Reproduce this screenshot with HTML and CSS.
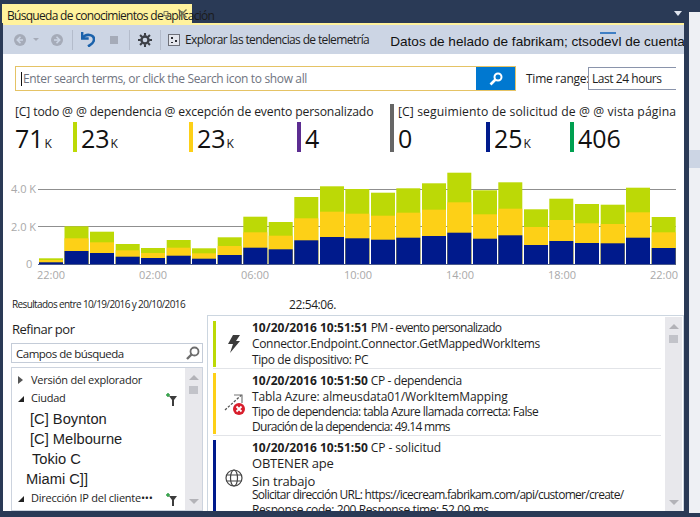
FILE: index.html
```html
<!DOCTYPE html>
<html lang="es">
<head>
    <meta charset="UTF-8">
    <title>Búsqueda de conocimientos de aplicación</title>
    <link rel="stylesheet" href="styles.css">
</head>
<body>
    <div class="titlebar">
        <div class="tab">
            <span class="tab-title">Búsqueda de conocimientos de aplicación</span>
            <svg class="tab-pin" width="8" height="8" viewBox="0 0 8 8"><path d="M2 .5h4v4H2zM.5 4.500h7M4 4.500V8" fill="none" stroke="#7d7a5c"/></svg>
            <svg class="tab-close" width="9" height="9" viewBox="0 0 9 9"><path d="M.5.5l8 8M8.500.5l-8 8" stroke="#6f6d55" stroke-width="1.400"/></svg>
        </div>
        <span class="tab-menu"></span>
    </div>

    <div class="main">
        <div class="window">
            <div class="toolbar">
                <svg class="tool tool-back" width="12" height="12" viewBox="0 0 12 12"><circle cx="6" cy="6" r="6" fill="#a5abb8"/><path d="M6.500 2.800L3.300 6l3.200 3.200M3.300 6h5.700" fill="none" stroke="#ccd5e4" stroke-width="1.600"/></svg>
                <span class="tool-caret"></span>
                <svg class="tool tool-forward" width="12" height="12" viewBox="0 0 12 12"><circle cx="6" cy="6" r="6" fill="#a5abb8"/><path d="M5.500 2.800L8.700 6 5.500 9.200M8.700 6H3" fill="none" stroke="#ccd5e4" stroke-width="1.600"/></svg>
                <span class="tool-sep sep-one"></span>
                <svg class="tool tool-undo" width="14" height="15" viewBox="0 0 14 15"><path d="M1.200 0v6.500h6.500" fill="none" stroke="#1b62ab" stroke-width="2.400"/><path d="M1.800 5.800C4.500 1.500 13 2 13 7.500c0 3-2.500 5-6 7" fill="none" stroke="#1b62ab" stroke-width="2.600"/></svg>
                <span class="tool-stop"></span>
                <span class="tool-sep sep-two"></span>
                <svg class="tool tool-gear" width="14" height="14" viewBox="0 0 15 15"><circle cx="7.500" cy="7.500" r="3.800" fill="none" stroke="#3c3f46" stroke-width="2.600"/><path d="M7.500 0v3M7.500 12v3M0 7.500h3M12 7.500h3M2.200 2.200l2.100 2.100M10.700 10.700l2.100 2.100M12.800 2.200l-2.100 2.100M4.300 10.700l-2.100 2.100" stroke="#3c3f46" stroke-width="2.200"/></svg>
                <span class="tool-sep sep-three"></span>
                <svg class="tool tool-trend" width="12" height="12" viewBox="0 0 12 12"><rect x=".5" y=".5" width="11" height="11" fill="#e4e6ec" stroke="#6e7078"/><path d="M3 3h2v2H3zM7 6h2v2H7zM3 8h2v1H3z" fill="#2b2d33"/></svg>
                <span class="tool-label">Explorar las tendencias de telemetría</span>
                <span class="account">Datos de helado de fabrikam; ctsodevl de cuenta</span>
                <span class="account-mark"></span>
            </div>

            <div class="search-row">
                <div class="search-box">
                    <span class="search-input"><i class="caret"></i>Enter search terms, or click the Search icon to show all</span>
                    <span class="search-btn">
                        <svg width="14" height="14" viewBox="0 0 14 14"><circle cx="9" cy="5" r="3.500" fill="none" stroke="#fff" stroke-width="2"/><path d="M6.500 7.500L1.500 12.500" stroke="#fff" stroke-width="2.600"/></svg>
                    </span>
                </div>
                <span class="range-label">Time range:</span>
                <span class="range-select">Last 24 hours</span>
            </div>

            <div class="metrics">
                <div class="metric-group group-left">
                    <div class="metric-title">[C] todo @ @ dependencia @ excepción de evento personalizado</div>
                    <div class="stats">
                        <div class="stat stat-all">71<small>K</small></div>
                        <div class="stat stat-dep">23<small>K</small></div>
                        <div class="stat stat-exc">23<small>K</small></div>
                        <div class="stat stat-evt">4</div>
                    </div>
                </div>
                <div class="metric-group group-right">
                    <div class="metric-title">[C] seguimiento de solicitud de @ @ vista página</div>
                    <div class="stats">
                        <div class="stat stat-trace">0</div>
                        <div class="stat stat-req">25<small>K</small></div>
                        <div class="stat stat-page">406</div>
                    </div>
                </div>
            </div>

            <svg class="chart" width="681" height="115" viewBox="3 170 681 115">
                <path d="M38 189.500H676M38 226.500H676" stroke="#8f8f8f" stroke-width="1.200"/>
                <g class="axis">
                    <text x="11" y="193">4.0 K</text>
                    <text x="11" y="231">2.0 K</text>
                    <text x="26" y="268">0</text>
                    <text x="37" y="279">22:00</text>
                    <text x="139" y="279">02:00</text>
                    <text x="241" y="279">06:00</text>
                    <text x="344" y="279">10:00</text>
                    <text x="446" y="279">14:00</text>
                    <text x="548" y="279">18:00</text>
                    <text x="650" y="279">22:00</text>
                </g>
                <g fill="#bcd906">
                    <rect x="39" y="258.300" width="24" height="6"/><rect x="64.500" y="226.300" width="24" height="38"/><rect x="90" y="231.700" width="24" height="33"/><rect x="115.700" y="244" width="24" height="20"/><rect x="141" y="248" width="24" height="16"/><rect x="166.700" y="240" width="24" height="24"/><rect x="192" y="248.300" width="24" height="16"/><rect x="217.700" y="237.300" width="24" height="27"/><rect x="243.300" y="216.700" width="24" height="47"/><rect x="268.700" y="222" width="24" height="42"/><rect x="294.300" y="197" width="24" height="67"/><rect x="320" y="186.300" width="24" height="78"/><rect x="345.300" y="189" width="24" height="75"/><rect x="371" y="192.700" width="24" height="71"/><rect x="396.300" y="188.300" width="24" height="76"/><rect x="422" y="183.300" width="24" height="81"/><rect x="447.300" y="172.700" width="24" height="91"/><rect x="473" y="190.300" width="24" height="74"/><rect x="498.300" y="182.300" width="24" height="82"/><rect x="524" y="209.300" width="24" height="55"/><rect x="549.300" y="198.700" width="24" height="65"/><rect x="575" y="204" width="24" height="60"/><rect x="600.700" y="204.700" width="24" height="59"/><rect x="626" y="187.700" width="24" height="76"/><rect x="651.700" y="217" width="24" height="47"/>
                </g>
                <g fill="#fdd017">
                    <rect x="39" y="260" width="24" height="4"/><rect x="64.500" y="238.300" width="24" height="26"/><rect x="90" y="242.300" width="24" height="22"/><rect x="115.700" y="250.300" width="24" height="14"/><rect x="141" y="253" width="24" height="11"/><rect x="166.700" y="247.700" width="24" height="16"/><rect x="192" y="253.300" width="24" height="11"/><rect x="217.700" y="246" width="24" height="18"/><rect x="243.300" y="232.300" width="24" height="32"/><rect x="268.700" y="235.700" width="24" height="28"/><rect x="294.300" y="218.300" width="24" height="46"/><rect x="320" y="211.700" width="24" height="52"/><rect x="345.300" y="213.700" width="24" height="50"/><rect x="371" y="215.700" width="24" height="48"/><rect x="396.300" y="212.700" width="24" height="51"/><rect x="422" y="209.700" width="24" height="54"/><rect x="447.300" y="202.300" width="24" height="62"/><rect x="473" y="214.300" width="24" height="50"/><rect x="498.300" y="208.700" width="24" height="55"/><rect x="524" y="227" width="24" height="37"/><rect x="549.300" y="220" width="24" height="44"/><rect x="575" y="223.300" width="24" height="41"/><rect x="600.700" y="224" width="24" height="40"/><rect x="626" y="212.300" width="24" height="52"/><rect x="651.700" y="232.300" width="24" height="32"/>
                </g>
                <g fill="#001a8c">
                    <rect x="39" y="262.300" width="24" height="2"/><rect x="64.500" y="251" width="24" height="13"/><rect x="90" y="253" width="24" height="11"/><rect x="115.700" y="256.700" width="24" height="7.500"/><rect x="141" y="258" width="24" height="6"/><rect x="166.700" y="255.700" width="24" height="8.500"/><rect x="192" y="258.700" width="24" height="5.500"/><rect x="217.700" y="255" width="24" height="9"/><rect x="243.300" y="247.700" width="24" height="16.500"/><rect x="268.700" y="249.300" width="24" height="15"/><rect x="294.300" y="240.300" width="24" height="24"/><rect x="320" y="237" width="24" height="27"/><rect x="345.300" y="238.300" width="24" height="26"/><rect x="371" y="239.700" width="24" height="24.500"/><rect x="396.300" y="237.700" width="24" height="26.500"/><rect x="422" y="236" width="24" height="28"/><rect x="447.300" y="232.700" width="24" height="31.500"/><rect x="473" y="238.700" width="24" height="25.500"/><rect x="498.300" y="235.300" width="24" height="29"/><rect x="524" y="245" width="24" height="19"/><rect x="549.300" y="241" width="24" height="23"/><rect x="575" y="243" width="24" height="21"/><rect x="600.700" y="243.300" width="24" height="21"/><rect x="626" y="237.700" width="24" height="26.500"/><rect x="651.700" y="248" width="24" height="16"/>
                </g>
                <path d="M38 264.500H676" stroke="#4a5a8c"/>
            </svg>

            <div class="results-row">
                <span class="results-range">Resultados entre 10/19/2016 y 20/10/2016</span>
                <span class="results-time">22:54:06.</span>
            </div>

            <div class="lower">
                <div class="refine">
                    <div class="refine-title">Refinar por</div>
                    <div class="field-search">
                        <span>Campos de búsqueda</span>
                        <svg width="14" height="14" viewBox="0 0 14 14"><circle cx="8.500" cy="5.500" r="4" fill="none" stroke="#6d6d6d" stroke-width="1.800"/><path d="M5.500 8.500L1 13" stroke="#6d6d6d" stroke-width="2.400"/></svg>
                    </div>
                    <div class="tree">
                        <div class="tree-items">
                            <div class="tree-item item-browser"><i class="arrow arrow-open"></i>Versión del explorador</div>
                            <div class="tree-item item-city"><i class="arrow arrow-down"></i>Ciudad
                                <svg class="funnel" width="11" height="13" viewBox="0 0 11 13"><path d="M3 3h8L8 7v6H6V7z" fill="#3d3d3d"/><path d="M0 2h4M2 0v4" stroke="#2f9e44" stroke-width="1.500"/></svg>
                            </div>
                            <div class="tree-value value-one">[C] Boynton</div>
                            <div class="tree-value value-two">[C] Melbourne</div>
                            <div class="tree-value value-three">Tokio C</div>
                            <div class="tree-value value-four">Miami C]]</div>
                            <div class="tree-item item-ip"><i class="arrow arrow-down"></i>Dirección IP del cliente•••
                                <svg class="funnel" width="11" height="13" viewBox="0 0 11 13"><path d="M3 3h8L8 7v6H6V7z" fill="#3d3d3d"/><path d="M0 2h4M2 0v4" stroke="#2f9e44" stroke-width="1.500"/></svg>
                            </div>
                        </div>
                        <div class="scrollbar">
                            <i class="scroll-up"></i>
                            <i class="scroll-thumb"></i>
                            <i class="scroll-down"></i>
                        </div>
                    </div>
                </div>

                <div class="events">
                    <div class="event-list">
                        <div class="event event-custom">
                            <svg class="event-icon" width="14" height="18" viewBox="0 0 14 18"><path d="M6 0h7L9 6h4L3 18l3-9H1z" fill="#3b3b3b"/></svg>
                            <div class="event-text">
                                <div class="event-head"><b>10/20/2016 10:51:51</b> <span class="tight-3">PM - evento personalizado</span></div>
                                <div class="tight-0">Connector.Endpoint.Connector.GetMappedWorkItems</div>
                                <div class="tight-1">Tipo de dispositivo: PC</div>
                            </div>
                        </div>
                        <div class="event event-dep">
                            <svg class="event-icon" width="24" height="24" viewBox="0 0 24 24"><path d="M3 18L19.500 3" fill="none" stroke="#555" stroke-dasharray="2.500 1.500" stroke-width="1.300"/><path d="M12 3h8v8" fill="none" stroke="#777" stroke-width="1.200"/><circle cx="17" cy="17" r="6" fill="#d81e2c"/><path d="M14.500 14.500l5 5M19.500 14.500l-5 5" stroke="#fff" stroke-width="1.800"/></svg>
                            <div class="event-text">
                                <div class="event-head"><b>10/20/2016 10:51:50</b> <span class="tight-1">CP - dependencia</span></div>
                                <div class="line-table">Tabla Azure: almeusdata01/WorkItemMapping</div>
                                <div class="tight-2 line-type">Tipo de dependencia: tabla Azure llamada correcta: False</div>
                                <div class="tight-3">Duración de la dependencia: 49.14 mms</div>
                            </div>
                        </div>
                        <div class="event event-req">
                            <svg class="event-icon" width="18" height="18" viewBox="0 0 18 18"><g fill="none" stroke="#444" stroke-width="1.200"><circle cx="9" cy="9" r="8"/><ellipse cx="9" cy="9" rx="3.500" ry="8"/><path d="M1.500 6h15M1.500 12h15"/></g></svg>
                            <div class="event-text">
                                <div class="event-head"><b>10/20/2016 10:51:50</b> <span class="line-table">CP - solicitud</span></div>
                                <div class="line-get">OBTENER ape</div>
                                <div class="line-job">Sin trabajo</div>
                                <div class="line-url tight-3">Solicitar dirección URL: https://icecream.fabrikam.com/api/customer/create/</div>
                                <div class="tight-1">Response code: 200 Response time: 52.09 ms</div>
                            </div>
                        </div>
                    </div>
                    <div class="scrollbar">
                        <i class="scroll-up"></i>
                        <i class="scroll-thumb"></i>
                        <i class="scroll-down"></i>
                    </div>
                </div>
            </div>
        </div>
        <div class="side-strip"><i class="side-band"></i></div>
    </div>
</body>
</html>
```

FILE: styles.css
```css
html, body {
    margin: 0;
    height: 100%;
}
body {
    width: 700px;
    height: 517px;
    overflow: hidden;
    background-color: #2a3a56;
    font-family: "Open Sans", sans-serif;
    font-size: 12px;
    color: #1e1e1e;
}

/* title bar */
.titlebar {
    height: 23px;
    display: flex;
    align-items: flex-end;
    justify-content: space-between;
    padding-left: 2px;
}
.tab {
    width: 190px;
    height: 19px;
    background-color: #fff29d;
    display: flex;
    align-items: center;
    position: relative;
    padding: 4px 0 0 5px;
    box-sizing: border-box;
    white-space: nowrap;
}
.tab-title {
    font-size: 12px;
    letter-spacing: -0.7px;
    color: #1b1b1b;
}
.tab-pin {
    position: absolute;
    left: 160px;
    top: 7px;
}
.tab-close {
    position: absolute;
    left: 176px;
    top: 5px;
}
.tab-menu {
    width: 0;
    height: 0;
    border: 4px solid transparent;
    border-top: 5px solid #dfe4ee;
    border-bottom: 0;
    margin: 0 18px 7px 0;
}

.main {
    display: flex;
    height: 488px;
    padding-left: 3px;
}
.window {
    width: 681px;
    flex: none;
    background-color: #fff;
    border-top: 2px solid #fff29d;
    box-sizing: border-box;
}
.side-strip {
    width: 11px;
    height: 501px;
    flex: none;
    margin: -11px 0 0 5px;
    background-color: #eef0f4;
    position: relative;
}
.side-band {
    position: absolute;
    top: 138px;
    left: 0;
    right: 0;
    height: 18px;
    background-color: #ccd5e4;
}

/* toolbar */
.toolbar {
    height: 29px;
    background-color: #ccd5e4;
    display: flex;
    align-items: center;
    position: relative;
    overflow: hidden;
    white-space: nowrap;
}
.toolbar > * {
    flex: none;
}
.tool-back { margin-left: 11px; }
.tool-caret {
    width: 0;
    height: 0;
    border: 3px solid transparent;
    border-top: 3px solid #a5abb8;
    border-bottom: 0;
    margin-left: 7px;
}
.tool-forward { margin-left: 12px; }
.tool-sep {
    width: 1px;
    height: 20px;
    background-color: #b4bccb;
}
.sep-one { margin-left: 9px; }
.tool-undo { margin-left: 8px; }
.tool-stop {
    width: 8px;
    height: 8px;
    background-color: #a5abb8;
    margin-left: 15px;
}
.sep-two { margin-left: 11px; }
.tool-gear { margin-left: 8px; }
.sep-three { margin-left: 8px; }
.tool-trend { margin-left: 7px; }
.tool-label {
    margin-left: 5px;
    font-size: 12px;
    letter-spacing: -0.63px;
}
.account {
    margin-left: 21px;
    padding-top: 4px;
    font-family: "Liberation Sans", sans-serif;
    font-size: 13.600px;
    color: #111;
}
.account-mark {
    position: absolute;
    left: 597px;
    top: 7px;
    width: 16px;
    height: 2px;
    background-color: #3f7fc4;
}

/* search */
.search-row {
    display: flex;
    align-items: center;
    padding: 12px 0 0 12px;
    height: 25px;
}
.search-box {
    width: 501px;
    height: 25px;
    box-sizing: border-box;
    border: 1px solid #e5c365;
    display: flex;
    align-items: center;
    justify-content: space-between;
}
.search-input {
    font-size: 12px;
    letter-spacing: -0.35px;
    color: #6f7480;
    padding-left: 5px;
    display: flex;
    align-items: center;
}
.caret {
    width: 1px;
    height: 14px;
    background-color: #111;
    margin-right: 1px;
}
.search-btn {
    width: 39px;
    height: 23px;
    background-color: #0078d0;
    display: flex;
    align-items: center;
    justify-content: center;
}
.range-label {
    margin-left: 10px;
    width: 60px;
    flex: none;
    white-space: nowrap;
    font-size: 12px;
    letter-spacing: -0.25px;
}
.range-select {
    margin-left: 2px;
    width: 88px;
    flex: none;
    height: 23px;
    box-sizing: border-box;
    border: 1px solid #8a94ab;
    border-right: 0;
    padding-left: 3px;
    line-height: 21px;
    letter-spacing: -0.45px;
}

/* metric counters */
.metrics {
    display: flex;
    margin-top: 13px;
    height: 48px;
}
.metric-group {
    display: flex;
    flex-direction: column;
    justify-content: space-between;
}
.group-left {
    width: 375px;
    padding-left: 12px;
}
.group-right {
    border-left: 4px solid #666;
    padding-left: 4px;
    flex: 1;
}
.metric-title {
    font-size: 12.200px;
    line-height: 16px;
    white-space: nowrap;
}
.group-left .metric-title { letter-spacing: -0.15px; }
.group-right .metric-title { letter-spacing: 0.1px; }
.stats {
    display: flex;
    height: 30px;
}
.stat {
    font-size: 25px;
    line-height: 32px;
    color: #111;
    box-sizing: border-box;
}
.stat small {
    font-size: 12px;
    margin-left: 1px;
}
.stat-all { width: 58px; }
.stat-dep { width: 116px; border-left: 4px solid #bcd906; padding-left: 4px; }
.stat-exc { width: 108px; border-left: 4px solid #fdd017; padding-left: 4px; }
.stat-evt { border-left: 4px solid #5c2d91; padding-left: 4px; }
.stat-trace { width: 88px; }
.stat-req { width: 84px; border-left: 4px solid #001a8c; padding-left: 4px; }
.stat-page { border-left: 4px solid #00a050; padding-left: 4px; }

/* chart */
.chart {
    display: block;
    margin-top: 18px;
}
.axis text {
    font-size: 11px;
    fill: #a9a9a9;
}

/* results line */
.results-row {
    display: flex;
    align-items: center;
    height: 14px;
    margin-top: 12px;
    padding-left: 9px;
    white-space: nowrap;
}
.results-range {
    width: 277px;
    font-size: 10px;
    letter-spacing: -0.62px;
}
.results-time {
    font-size: 12px;
    letter-spacing: -0.4px;
}

/* lower panes */
.lower {
    display: flex;
    padding-left: 8px;
    margin-top: 2px;
    height: 198px;
    overflow: hidden;
}
.refine {
    width: 192px;
    flex: none;
    padding-top: 7px;
}
.refine-title {
    font-size: 13px;
    letter-spacing: -0.5px;
    line-height: 19px;
    margin-left: 1px;
}
.field-search {
    height: 20px;
    margin-top: 4px;
    box-sizing: border-box;
    border: 1px solid #c4ccd8;
    display: flex;
    align-items: center;
    justify-content: space-between;
    padding: 0 2px 0 4px;
    font-size: 11.500px;
    letter-spacing: -0.5px;
}
.tree {
    height: 144px;
    margin-top: 4px;
    box-sizing: border-box;
    border: 1px solid #ccd3de;
    display: flex;
}
.tree-items {
    flex: 1;
    padding-top: 3px;
}
.tree-item {
    height: 18px;
    line-height: 18px;
    font-size: 11px;
    letter-spacing: -0.25px;
    padding-left: 19px;
    position: relative;
    white-space: nowrap;
}
.item-city { margin-bottom: 2px; }
.arrow {
    position: absolute;
    left: 6px;
    top: 5px;
    width: 0;
    height: 0;
}
.arrow-open {
    border-top: 4px solid transparent;
    border-bottom: 4px solid transparent;
    border-left: 5px solid #555;
}
.arrow-down {
    top: 7px;
    border-left: 6px solid transparent;
    border-bottom: 6px solid #222;
}
.funnel {
    position: absolute;
    right: 8px;
    top: 4px;
}
.tree-value {
    font-family: "Liberation Sans", sans-serif;
    font-size: 14.700px;
    line-height: 20px;
    padding-left: 18px;
}
.value-three { padding-left: 20px; }
.value-four { padding-left: 14px; }
.scrollbar {
    width: 17px;
    background-color: #e8e8ec;
    display: flex;
    flex-direction: column;
    align-items: center;
    flex: none;
}
.scrollbar i {
    display: block;
}
.scroll-up {
    margin-top: 7px;
    border-left: 5px solid transparent;
    border-right: 5px solid transparent;
    border-bottom: 5px solid #b3b3b8;
}
.scroll-thumb {
    width: 9px;
    height: 8px;
    margin-top: 6px;
    background-color: #c2c3c9;
}
.scroll-down {
    margin-top: auto;
    margin-bottom: 6px;
    border-left: 5px solid transparent;
    border-right: 5px solid transparent;
    border-top: 5px solid #b3b3b8;
}

.events {
    margin-left: 4px;
    width: 477px;
    flex: none;
    margin-top: 2px;
    height: 196px;
    box-sizing: border-box;
    border: 1px solid #ccd6e0;
    border-bottom: 0;
    display: flex;
}
.events .scrollbar {
    margin: 1px 1px 0 0;
}
.event-list {
    flex: 1;
    padding: 5px 4px 0 5px;
    overflow: hidden;
}
.event {
    display: flex;
    border-left: 3px solid;
    position: relative;
    font-size: 12px;
    letter-spacing: -0.2px;
    line-height: 16px;
}
.event::after {
    content: "";
    position: absolute;
    left: -3px;
    right: 0;
    bottom: -2px;
    height: 1px;
    background-color: #e2e4e8;
}
.event-custom { border-color: #bcd906; height: 46px; margin-bottom: 6px; }
.event-custom .event-text { margin-top: -1px; }
.event-dep { border-color: #fdd017; height: 61px; margin-bottom: 6px; }
.event-req { border-color: #001a8c; height: 76px; overflow: visible; }
.event-req::after { display: none; }
.event-icon {
    width: 36px;
    flex: none;
    align-self: center;
}
.event-text {
    white-space: nowrap;
}
.event-head b {
    font-size: 12px;
    letter-spacing: 0;
}
.tight-0 { letter-spacing: -0.33px; }
.tight-1 { letter-spacing: -0.4px; }
.tight-2 { letter-spacing: -0.57px; }
.tight-3 { letter-spacing: -0.72px; }
.line-table { letter-spacing: -0.1px; }
.line-type { line-height: 14px; }
.line-get {
    font-size: 13px;
    line-height: 15px;
}
.line-job {
    font-size: 13px;
    line-height: 15px;
    margin-top: 3px;
}
.line-url {
    line-height: 15px;
    margin-top: -2px;
}
.event-req .tight-1 { line-height: 15px; }
```
